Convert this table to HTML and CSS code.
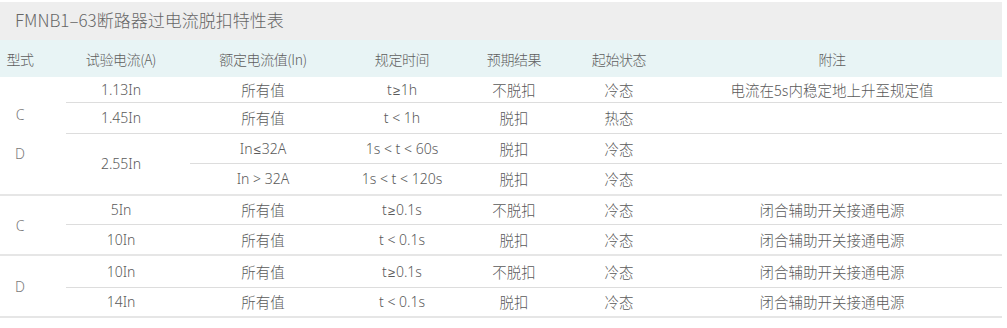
FILE: index.html
```html
<!DOCTYPE html>
<html lang="zh-CN">
<head>
<meta charset="utf-8">
<title>FMNB1-63断路器过电流脱扣特性表</title>
<link rel="stylesheet" href="styles.css">
</head>
<body>
<div class="panel">
  <div class="title">FMNB1–63断路器过电流脱扣特性表</div>
  <table class="spec">
    <colgroup>
      <col class="w1"><col class="w2"><col class="w3"><col class="w4"><col class="w5"><col class="w6"><col class="w7">
    </colgroup>
    <thead>
      <tr class="head">
        <th class="c1">型式</th>
        <th class="c2">试验电流(A)</th>
        <th>额定电流值(In)</th>
        <th>规定时间</th>
        <th>预期结果</th>
        <th>起始状态</th>
        <th class="c7">附注</th>
      </tr>
    </thead>
    <tbody class="group">
      <tr class="r1">
        <td class="c1 type" rowspan="4"><div class="types"><span>C</span><span>D</span></div></td>
        <td class="c2 in">1.13In</td>
        <td>所有值</td>
        <td class="t">t<span class="op">≥</span>1h</td>
        <td>不脱扣</td>
        <td>冷态</td>
        <td class="c7">电流在5s内稳定地上升至规定值</td>
      </tr>
      <tr class="r2">
        <td class="c2 in">1.45In</td>
        <td>所有值</td>
        <td class="t">t &lt; 1h</td>
        <td>脱扣</td>
        <td>热态</td>
        <td class="c7"></td>
      </tr>
      <tr class="r3">
        <td class="c2 in last" rowspan="2">2.55In</td>
        <td class="t">In<span class="op">≤</span>32A</td>
        <td class="t">1s &lt; t &lt; 60s</td>
        <td>脱扣</td>
        <td>冷态</td>
        <td class="c7"></td>
      </tr>
      <tr class="r4 end">
        <td class="t">In &gt; 32A</td>
        <td class="t">1s &lt; t &lt; 120s</td>
        <td>脱扣</td>
        <td>冷态</td>
        <td class="c7"></td>
      </tr>
    </tbody>
    <tbody class="group">
      <tr class="r5">
        <td class="c1 type" rowspan="2">C</td>
        <td class="c2 in">5In</td>
        <td>所有值</td>
        <td class="t">t<span class="op">≥</span>0.1s</td>
        <td>不脱扣</td>
        <td>冷态</td>
        <td class="c7">闭合辅助开关接通电源</td>
      </tr>
      <tr class="r6 end">
        <td class="c2 in">10In</td>
        <td>所有值</td>
        <td class="t">t &lt; 0.1s</td>
        <td>脱扣</td>
        <td>冷态</td>
        <td class="c7">闭合辅助开关接通电源</td>
      </tr>
    </tbody>
    <tbody class="group">
      <tr class="r7">
        <td class="c1 type" rowspan="2">D</td>
        <td class="c2 in">10In</td>
        <td>所有值</td>
        <td class="t">t<span class="op">≥</span>0.1s</td>
        <td>不脱扣</td>
        <td>冷态</td>
        <td class="c7">闭合辅助开关接通电源</td>
      </tr>
      <tr class="r8 end">
        <td class="c2 in">14In</td>
        <td>所有值</td>
        <td class="t">t &lt; 0.1s</td>
        <td>脱扣</td>
        <td>冷态</td>
        <td class="c7">闭合辅助开关接通电源</td>
      </tr>
    </tbody>
  </table>
</div>
</body>
</html>
```
FILE: styles.css
```css
html, body {
  margin: 0;
  padding: 0;
  background: #ffffff;
}

body {
  font-family: "Noto Sans CJK SC", "Noto Sans", sans-serif;
  font-weight: 300;
  color: #5a5a5a;
}

.panel {
  width: 1002px;
  padding-top: 2px;
}

.title {
  height: 38px;
  line-height: 36px;
  background: #eeeeee;
  padding-left: 15px;
  font-size: 17px;
  font-weight: 300;
  color: #666666;
}

.spec {
  width: 1002px;
  table-layout: fixed;
  border-collapse: collapse;
  font-size: 14.5px;
}

.w1 { width: 66px; }
.w2 { width: 124px; }
.w3 { width: 146px; }
.w4 { width: 132px; }
.w5 { width: 92px; }
.w6 { width: 118px; }
.w7 { width: 324px; }

.spec th,
.spec td {
  padding: 0;
  text-align: center;
  vertical-align: middle;
  font-weight: 300;
  white-space: nowrap;
}

.head {
  background: #e8f4f5;
  height: 37px;
}

.head th {
  font-size: 14px;
  color: #5e5e5e;
  letter-spacing: -0.4px;
}

.c1 { padding-right: 26px !important; }
.c2 { padding-right: 14px !important; }
.c7 { padding-right: 16px !important; }

.type {
  font-family: "Noto Sans", "Liberation Sans", sans-serif;
  font-size: 14px;
  color: #7a7a7a;
}

.types {
  display: flex;
  flex-direction: column;
  align-items: center;
  gap: 22px;
  line-height: 17px;
  transform: translateY(-2px);
}

.in,
.t {
  font-family: "Noto Sans", "DejaVu Sans", "Noto Sans CJK SC", sans-serif;
  font-size: 14px;
}

.op {
  font-family: "Liberation Sans", sans-serif;
  font-weight: 400;
  font-size: 13px;
  padding: 0 1px;
}

.spec tbody td {
  border-bottom: 1px solid #dddddd;
}

.spec tbody td.type,
.spec tbody tr.end td,
.spec tbody td.last {
  border-bottom: 2px solid #e6e6e6;
}

.r1 { height: 25px; }
.r2 { height: 31px; }
.r3 { height: 30px; }
.r4 { height: 32px; }
.r5 { height: 29px; }
.r6 { height: 31px; }
.r7 { height: 32px; }
.r8 { height: 30px; }
```
